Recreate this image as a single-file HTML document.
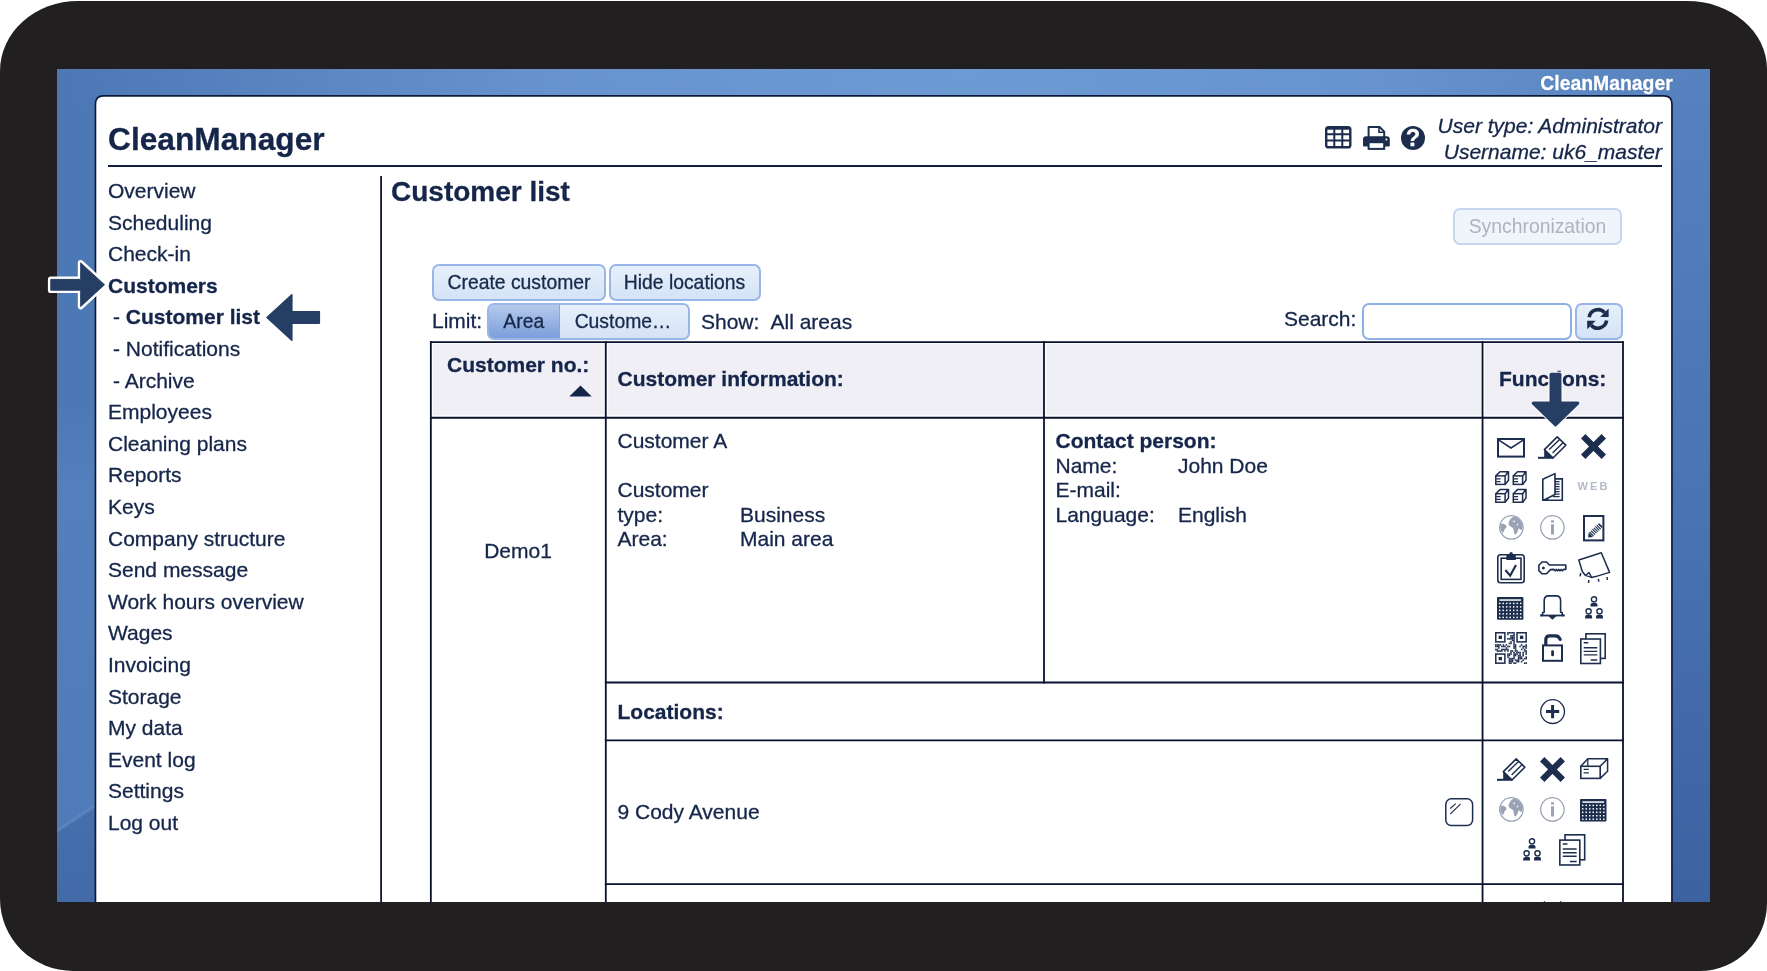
<!DOCTYPE html>
<html lang="en">
<head>
<meta charset="utf-8">
<title>CleanManager - Customer list</title>
<style>
html,body{margin:0;padding:0;background:#fff;}
body{width:1767px;height:971px;overflow:hidden;position:relative;font-family:"Liberation Sans",Arial,sans-serif;color:#15264a;font-size:21px;-webkit-text-stroke-width:0.3px;}
#frame{position:absolute;left:0;top:1px;width:1767px;height:970px;background:#221f20;border-radius:78px 80px 67px 73px / 70px 68px 68px 72px;}
#screen{position:absolute;left:57px;top:69px;width:1653px;height:833px;overflow:hidden;
 background:
  radial-gradient(ellipse 900px 300px at 55% 0%, rgba(114,160,216,0.85) 0%, rgba(114,160,216,0.7) 45%, rgba(114,160,216,0) 100%),
  linear-gradient(180deg,#4d78b6 0%,#4d78b6 100%);}
#lstrip{position:absolute;left:0;top:0;width:40px;height:833px;background:linear-gradient(180deg,rgba(77,120,182,0) 0%,#4d78b6 6%,#4d78b6 40%,#537fbc 50%,#507cb9 88%,#4b75b3 100%);}
#rstrip{position:absolute;left:1610px;top:0;width:43px;height:833px;background:linear-gradient(180deg,rgba(84,129,190,0) 0%,#5481be 5%,#4a74b2 50%,#3c62a0 100%);}
#pg{will-change:transform;position:absolute;left:-57px;top:-69px;width:1767px;height:971px;}
.t{position:absolute;white-space:nowrap;line-height:24px;height:24px;}
.b{font-weight:bold;}
.menu{position:absolute;left:108px;top:175px;font-size:21px;line-height:31.6px;white-space:nowrap;}
.menu div{height:31.6px;}
.menu .sub{padding-left:5px;}
h1{position:absolute;margin:0;left:391px;top:176px;font-size:28px;line-height:32px;font-weight:bold;white-space:nowrap;}
.btn{position:absolute;box-sizing:border-box;border:2px solid #98b6e7;border-radius:7px;background:linear-gradient(#e7f0fb,#d5e3f6);font-size:19.35px;text-align:center;white-space:nowrap;color:#18294b;}
.ic{position:absolute;overflow:visible;}
svg{display:block;}
</style>
</head>
<body>
<div id="frame"></div>
<div id="screen"><div id="lstrip"></div><div id="rstrip"></div><div id="pg">
  <div class="t b" style="left:1400px;top:71px;width:1272.8px;left:400px;text-align:right;color:#fff;font-size:19.4px;text-shadow:0 0 1.5px #3f68a8;">CleanManager</div>
  <svg class="ic" style="left:57px;top:69px;" width="1653" height="833" viewBox="0 0 1653 833"><path d="M0 762 L38 737 L38 833 L0 833 Z" fill="#2f5392" opacity="0.3"/><path d="M0 760 L38 735 L38 739 L0 764 Z" fill="#8db0de" opacity="0.22"/></svg>
  <svg class="ic" style="left:0;top:0;" width="1767" height="971" viewBox="0 0 1767 971">
    <path d="M95.45 930 V104 Q95.45 95.85 103.6 95.85 H1663.8 Q1671.95 95.85 1671.95 104 V930" fill="#fff" stroke="#0c1b3d" stroke-width="1.7"/>
    <path d="M108 166 H1662" stroke="#0f1f3f" stroke-width="2"/>
    <path d="M381.1 176 V930" stroke="#0a1533" stroke-width="1.8"/>
    <g fill="#f0eff6">
      <rect x="433" y="343.6" width="171.9" height="71.6"/>
      <rect x="608.2" y="343.6" width="434.9" height="71.6"/>
      <rect x="1046.4" y="343.6" width="435.2" height="71.6"/>
      <rect x="1484.9" y="343.6" width="137.2" height="71.6"/>
    </g>
    <g stroke="#08122f" stroke-width="1.8" fill="none">
      <path d="M429.95 342.05 H1623.9 M429.95 417.75 H1623.9 M604.9 682.5 H1623.9 M604.9 740.3 H1623.9 M604.9 884.1 H1623.9"/>
      <path d="M430.85 341.15 V930 M605.8 341.15 V930 M1044 341.15 V683.4 M1482.55 341.15 V930 M1623 341.15 V930"/>
    </g>
  </svg>
  <div class="t b" style="left:108px;top:120px;font-size:31.7px;line-height:38px;height:38px;">CleanManager</div>

  <div class="t" style="left:1362px;width:300px;text-align:right;top:113px;font-style:italic;line-height:26.3px;height:auto;">User type: Administrator<br>Username: uk6_master</div>
  <div class="menu">
    <div>Overview</div>
    <div>Scheduling</div>
    <div>Check-in</div>
    <div class="b">Customers</div>
    <div class="sub">- <span class="b">Customer list</span></div>
    <div class="sub">- Notifications</div>
    <div class="sub">- Archive</div>
    <div>Employees</div>
    <div>Cleaning plans</div>
    <div>Reports</div>
    <div>Keys</div>
    <div>Company structure</div>
    <div>Send message</div>
    <div>Work hours overview</div>
    <div>Wages</div>
    <div>Invoicing</div>
    <div>Storage</div>
    <div>My data</div>
    <div>Event log</div>
    <div>Settings</div>
    <div>Log out</div>
  </div>
  <h1>Customer list</h1>

  <div class="btn" style="left:1453px;top:208px;width:169px;height:37px;line-height:32px;-webkit-text-stroke-width:0;color:#adb3c0;background:#f0f4fb;border-color:#c6d6f0;">Synchronization</div>
  <div class="btn" style="left:432px;top:264px;width:174px;height:36.5px;line-height:32.5px;">Create customer</div>
  <div class="btn" style="left:608.5px;top:264px;width:152px;height:36.5px;line-height:32.5px;">Hide locations</div>

  <div class="t" style="left:432px;top:309px;">Limit:</div>
  <div class="btn" style="left:487px;top:303px;width:202.5px;height:36.5px;line-height:32.5px;overflow:hidden;">
    <div style="position:absolute;left:0;top:0;width:69.5px;height:100%;background:linear-gradient(#b5c9ec,#7c9edb);border-right:1px solid #86a6dc;">Area</div>
    <div style="position:absolute;left:70px;top:0;width:128px;height:100%;">Custome…</div>
  </div>
  <div class="t" style="left:701px;top:310px;">Show:</div>
  <div class="t" style="left:770.5px;top:310px;">All areas</div>
  <div class="t" style="left:1284px;top:307px;">Search:</div>
  <div class="btn" style="left:1361.5px;top:303px;width:210px;height:36.5px;background:#fff;border-color:#8fb0e4;"></div>
  <div class="btn" style="left:1575px;top:303px;width:47.5px;height:36.5px;"></div>

  <!-- table -->
  

  <div class="t b" style="left:447px;top:353px;">Customer no.:</div>
  <svg class="ic" style="left:568.7px;top:385.4px;" width="23" height="12" viewBox="0 0 23 12"><path d="M0.3 11.6 L11.5 0.6 L22.7 11.6 Z" fill="#13264a"/></svg>
  <div class="t b" style="left:617.5px;top:367.3px;">Customer information:</div>
  <div class="t b" style="left:1499px;top:367.3px;">Functions:</div>

  <div class="t" style="left:431px;width:174px;text-align:center;top:539px;">Demo1</div>
  <div class="t" style="left:617.5px;top:429px;line-height:24.5px;height:auto;">Customer A<br><br>Customer<br>type:<br>Area:</div>
  <div class="t" style="left:740px;top:429px;line-height:24.5px;height:auto;"><br><br><br>Business<br>Main area</div>
  <div class="t" style="left:1055.5px;top:429px;line-height:24.5px;height:auto;"><span class="b">Contact person:</span><br>Name:<br>E-mail:<br>Language:</div>
  <div class="t" style="left:1178px;top:429px;line-height:24.5px;height:auto;"><br>John Doe<br><br>English</div>
  <div class="t b" style="left:617.5px;top:700px;">Locations:</div>
  <div class="t" style="left:617.5px;top:800px;">9 Cody Avenue</div>

<svg class="ic" style="left:1325px;top:125.5px;" width="26.5" height="22.5" viewBox="0 0 26.5 22.5" ><rect x="1.2" y="1.2" width="24.1" height="20.1" rx="2.4" fill="#fff" stroke="#1c2d4e" stroke-width="2.4"/><path d="M1.2 8.2 H25.3 M1.2 14.6 H25.3 M9.3 3 V21.3 M17.3 3 V21.3" stroke="#1c2d4e" stroke-width="2"/><path d="M1.2 2.7 H25.3" stroke="#1c2d4e" stroke-width="2"/></svg>
<svg class="ic" style="left:1362.8px;top:125.5px;" width="26.8" height="24" viewBox="0 0 26.8 24" ><path d="M5.6 11 V1 H16.6 L21.2 5.6 V11" fill="#fff" stroke="#1c2d4e" stroke-width="2" stroke-linejoin="round"/><path d="M16 1 V6.2 H21.2" fill="none" stroke="#1c2d4e" stroke-width="1.6"/><path d="M0 19.6 V13.2 Q0 10.2 3 10.2 H23.8 Q26.8 10.2 26.8 13.2 V19.6 Q26.8 20.4 26 20.4 H0.8 Q0 20.4 0 19.6 Z" fill="#1c2d4e"/><rect x="5.6" y="16.2" width="15.6" height="6.7" fill="#fff" stroke="#1c2d4e" stroke-width="2"/><circle cx="23.4" cy="13.6" r="1" fill="#fff"/></svg>
<div class="ic" style="left:1401px;top:125.6px;width:24px;height:24px;border-radius:50%;background:#1c2d4e;color:#fff;font-weight:bold;font-size:23.5px;line-height:25.5px;text-align:center;">?</div>
<svg class="ic" style="left:1586.2px;top:307.6px;" width="23.8" height="21.8" viewBox="0 0 23.8 21.8" ><path d="M3.2 9.2 A8.9 8.9 0 0 1 18.6 4.6" fill="none" stroke="#1c2d4e" stroke-width="3.6"/><path d="M22.6 0.6 V9 H14.2 Z" fill="#1c2d4e"/><path d="M20.6 12.6 A8.9 8.9 0 0 1 5.2 17.2" fill="none" stroke="#1c2d4e" stroke-width="3.6"/><path d="M1.2 21.2 V12.8 H9.6 Z" fill="#1c2d4e"/></svg>
<svg class="ic" style="left:1497px;top:437.6px;" width="28" height="19.6" viewBox="0 0 28 19.6" ><rect x="1" y="1" width="26" height="17.6" fill="none" stroke="#1c2d4e" stroke-width="2"/><path d="M1.5 1.8 L14 10 L26.5 1.8" fill="none" stroke="#1c2d4e" stroke-width="1.5"/><path d="M1 1 L4.5 1 L1 3.5 Z M27 1 L23.5 1 L27 3.5 Z" fill="#1c2d4e"/></svg>
<svg class="ic" style="left:1538.3px;top:435.9px;" width="29" height="23" viewBox="0 0 29 23" ><path d="M19.2 0.9 L27.8 9.2 L15 22 L6.4 13.6 Z" fill="#fff" stroke="#1c2d4e" stroke-width="1.6" stroke-linejoin="round"/><path d="M21.6 3.4 L11.2 13.6 M25 6.8 L14.6 17" fill="none" stroke="#1c2d4e" stroke-width="1.4"/><path d="M6.2 13.2 L6.2 22 L15.2 22 Z" fill="#1c2d4e"/><path d="M0 21.8 L15.4 21.8" stroke="#1c2d4e" stroke-width="2"/></svg>
<svg class="ic" style="left:1581px;top:434px;" width="25" height="25" viewBox="0 0 25 25" ><path d="M2.2 2.2 L22.8 22.8 M22.8 2.2 L2.2 22.8" stroke="#1c2d4e" stroke-width="6.2" fill="none"/></svg>
<svg class="ic" style="left:1495.4px;top:471px;" width="32" height="32" viewBox="0 0 32 32" ><g transform="translate(0 0)"><rect x="0.8" y="4.9" width="9.3" height="8.5" fill="none" stroke="#1c2d4e" stroke-width="1.5"/><path d="M0.8 4.9 L5 0.8 L13.5 0.8 L13.5 9.3 L10.1 13.4 M13.5 0.8 L10.1 4.9" fill="none" stroke="#1c2d4e" stroke-width="1.5" stroke-linejoin="round"/><path d="M13.5 0.8 L10.6 0.8 L13.5 3.6 Z" fill="#1c2d4e"/><path d="M1.2 7.9 L5.6 7.9 M1.2 10.6 L5.6 10.6" stroke="#1c2d4e" stroke-width="1.3"/></g><g transform="translate(17.5 0)"><rect x="0.8" y="4.9" width="9.3" height="8.5" fill="none" stroke="#1c2d4e" stroke-width="1.5"/><path d="M0.8 4.9 L5 0.8 L13.5 0.8 L13.5 9.3 L10.1 13.4 M13.5 0.8 L10.1 4.9" fill="none" stroke="#1c2d4e" stroke-width="1.5" stroke-linejoin="round"/><path d="M13.5 0.8 L10.6 0.8 L13.5 3.6 Z" fill="#1c2d4e"/><path d="M1.2 7.9 L5.6 7.9 M1.2 10.6 L5.6 10.6" stroke="#1c2d4e" stroke-width="1.3"/></g><g transform="translate(0 17.8)"><rect x="0.8" y="4.9" width="9.3" height="8.5" fill="none" stroke="#1c2d4e" stroke-width="1.5"/><path d="M0.8 4.9 L5 0.8 L13.5 0.8 L13.5 9.3 L10.1 13.4 M13.5 0.8 L10.1 4.9" fill="none" stroke="#1c2d4e" stroke-width="1.5" stroke-linejoin="round"/><path d="M13.5 0.8 L10.6 0.8 L13.5 3.6 Z" fill="#1c2d4e"/><path d="M1.2 7.9 L5.6 7.9 M1.2 10.6 L5.6 10.6" stroke="#1c2d4e" stroke-width="1.3"/></g><g transform="translate(17.5 17.8)"><rect x="0.8" y="4.9" width="9.3" height="8.5" fill="none" stroke="#1c2d4e" stroke-width="1.5"/><path d="M0.8 4.9 L5 0.8 L13.5 0.8 L13.5 9.3 L10.1 13.4 M13.5 0.8 L10.1 4.9" fill="none" stroke="#1c2d4e" stroke-width="1.5" stroke-linejoin="round"/><path d="M13.5 0.8 L10.6 0.8 L13.5 3.6 Z" fill="#1c2d4e"/><path d="M1.2 7.9 L5.6 7.9 M1.2 10.6 L5.6 10.6" stroke="#1c2d4e" stroke-width="1.3"/></g></svg>
<svg class="ic" style="left:1542px;top:473px;" width="21.2" height="28.2" viewBox="0 0 21.2 28.2" ><path d="M13 5.9 L20.3 5.9 L20.3 27.3 L0.8 27.3" fill="none" stroke="#1c2d4e" stroke-width="1.6"/><path d="M0.8 6.3 L13 0.6 L13 21.5 L3.5 26.3 L0.8 27.3 Z" fill="#fff" stroke="#1c2d4e" stroke-width="1.6" stroke-linejoin="round"/><path d="M13 8.6 H17.6 M13 11.1 H17.6 M13 13.6 H17.6 M13 16.1 H17.6 M13 18.6 H17.6 M13 21.1 H17.6 M11 23.6 H17.6" stroke="#1c2d4e" stroke-width="1.2"/><path d="M2.5 27.3 L5 25.3 L7 27.3 Z" fill="#1c2d4e"/></svg>
<div class="ic b" style="left:1577.5px;top:479.5px;width:31px;height:13px;line-height:13px;font-size:11px;letter-spacing:2.1px;-webkit-text-stroke-width:0;color:#b3bac9;white-space:nowrap;">WEB</div>
<svg class="ic" style="left:1498.8px;top:514.9px;" width="24.8" height="24.8" viewBox="0 0 24.8 24.8" ><circle cx="12.4" cy="12.4" r="11.7" fill="#fff" stroke="#9aa3b6" stroke-width="1.3"/><path d="M1.5 9.5 C3 7.5 5 8.5 6.5 10 C8.5 11.5 7 13.5 5.5 14.5 C5 16.5 4.5 18 3.2 17.6 C1.5 15.5 0.9 12.5 1.5 9.5 Z" fill="#9aa3b6"/><path d="M10 7 C11 4 13 2 15.5 1.6 C19 2.6 22 5.5 23.3 9 C23.8 12 23.5 14 22.5 15 C21 14.5 20.5 13 19.5 13.5 C19 15.5 18 19 16.2 19.5 C14.5 18 15 15 14 13 C12.5 12 10.5 11.5 9.8 9.8 C9.5 8.5 9.6 7.8 10 7 Z" fill="#9aa3b6"/><path d="M13.5 6.5 L15.5 5 L16 7.5 Z M17.5 9 L19.5 8.5 L18.5 11 Z" fill="#fff" opacity="0.8"/></svg>
<svg class="ic" style="left:1540.1px;top:514.9px;" width="24.8" height="24.8" viewBox="0 0 24.8 24.8" ><circle cx="12.4" cy="12.4" r="11.7" fill="#fff" stroke="#9aa3b6" stroke-width="1.3"/><rect x="11" y="9.3" width="3" height="10.2" fill="#9aa3b6"/><rect x="11" y="5.3" width="3" height="2.3" fill="#9aa3b6"/></svg>
<svg class="ic" style="left:1583px;top:515px;" width="21.4" height="26.4" viewBox="0 0 21.4 26.4" ><rect x="1" y="1" width="19.4" height="24.4" fill="#fff" stroke="#1c2d4e" stroke-width="2"/><path d="M8.2 19.4 L17.2 10.6" stroke="#1c2d4e" stroke-width="5.6" stroke-dasharray="1.1 0.9" fill="none"/><path d="M5.2 22.6 L5.6 17.6 L10 22 Z" fill="#1c2d4e"/><path d="M16.2 8.2 L19.6 11.6 L18.6 12.6 L15.2 9.2 Z" fill="#1c2d4e"/></svg>
<svg class="ic" style="left:1497px;top:551.7px;" width="28" height="31.7" viewBox="0 0 28 31.7" ><rect x="0.8" y="2.8" width="26.4" height="28" rx="2.8" fill="#fff" stroke="#1c2d4e" stroke-width="1.6"/><rect x="4.2" y="6.2" width="19.8" height="21.2" fill="none" stroke="#1c2d4e" stroke-width="1.6"/><path d="M9.4 2.2 H12.2 L13 0.2 H15.2 L16 2.2 H18.8 V8 H9.4 Z" fill="#1c2d4e"/><path d="M8.4 18 L13.2 23.6 L19 13" fill="none" stroke="#1c2d4e" stroke-width="2.1"/></svg>
<svg class="ic" style="left:1538px;top:560.7px;" width="28.8" height="13.8" viewBox="0 0 28.8 13.8" ><path d="M4 1 L8.5 1 L11.5 4 L27.8 4 L27.8 8.4 L25.6 8.4 L24.4 9.8 L23.2 8.4 L22 9.8 L20.8 8.4 L19.6 9.8 L18.4 8.4 L17.2 9.8 L16 8.4 L12.5 8.6 L8.5 12.8 L4 12.8 L0.9 9.6 L0.9 4.2 Z" fill="#fff" stroke="#1c2d4e" stroke-width="1.6" stroke-linejoin="round"/><circle cx="5.4" cy="6.9" r="1.5" fill="#1c2d4e"/></svg>
<svg class="ic" style="left:1577.8px;top:551.7px;" width="32.5" height="31.3" viewBox="0 0 32.5 31.3" ><path d="M0.8 8 L23.3 0.8 L31.6 20.4 L17.5 24.6 L13.5 25.4 L11 20.5 L7.5 23.5 L4.3 19.5 Z" fill="#fff" stroke="#1c2d4e" stroke-width="1.5" stroke-linejoin="round"/><path d="M7.5 23.5 L13.5 25.4" stroke="#1c2d4e" stroke-width="1.2"/><path d="M2.6 21 L2.2 24.4 M10.8 28 L10.6 31 M20.2 27 L21 29.6 M29 25 L29.4 28" stroke="#1c2d4e" stroke-width="1.5"/></svg>
<svg class="ic" style="left:1497.2px;top:597.2px;" width="26.4" height="22.8" viewBox="0 0 26.4 22.8" ><rect x="0" y="0" width="26.4" height="22.8" rx="0.8" fill="#1c2d4e"/><rect x="2.4" y="2.3" width="21.599999999999998" height="1.5" fill="#fff"/><rect x="1.95" y="5.65" width="1.5" height="1.5" fill="#fff"/><rect x="1.95" y="9.15" width="1.5" height="1.5" fill="#fff"/><rect x="1.95" y="12.65" width="1.5" height="1.5" fill="#fff"/><rect x="1.95" y="16.15" width="1.5" height="1.5" fill="#fff"/><rect x="1.95" y="19.65" width="1.5" height="1.5" fill="#fff"/><rect x="5.45" y="5.65" width="1.5" height="1.5" fill="#fff"/><rect x="5.45" y="9.15" width="1.5" height="1.5" fill="#fff"/><rect x="5.45" y="12.65" width="1.5" height="1.5" fill="#fff"/><rect x="5.45" y="16.15" width="1.5" height="1.5" fill="#fff"/><rect x="5.45" y="19.65" width="1.5" height="1.5" fill="#fff"/><rect x="8.95" y="5.65" width="1.5" height="1.5" fill="#fff"/><rect x="8.95" y="9.15" width="1.5" height="1.5" fill="#fff"/><rect x="8.95" y="12.65" width="1.5" height="1.5" fill="#fff"/><rect x="8.95" y="16.15" width="1.5" height="1.5" fill="#fff"/><rect x="8.95" y="19.65" width="1.5" height="1.5" fill="#fff"/><rect x="12.45" y="5.65" width="1.5" height="1.5" fill="#fff"/><rect x="12.45" y="9.15" width="1.5" height="1.5" fill="#fff"/><rect x="12.45" y="12.65" width="1.5" height="1.5" fill="#fff"/><rect x="12.45" y="16.15" width="1.5" height="1.5" fill="#fff"/><rect x="12.45" y="19.65" width="1.5" height="1.5" fill="#fff"/><rect x="15.95" y="5.65" width="1.5" height="1.5" fill="#fff"/><rect x="15.95" y="9.15" width="1.5" height="1.5" fill="#fff"/><rect x="15.95" y="12.65" width="1.5" height="1.5" fill="#fff"/><rect x="15.95" y="16.15" width="1.5" height="1.5" fill="#fff"/><rect x="15.95" y="19.65" width="1.5" height="1.5" fill="#fff"/><rect x="19.45" y="5.65" width="1.5" height="1.5" fill="#fff"/><rect x="19.45" y="9.15" width="1.5" height="1.5" fill="#fff"/><rect x="19.45" y="12.65" width="1.5" height="1.5" fill="#fff"/><rect x="19.45" y="16.15" width="1.5" height="1.5" fill="#fff"/><rect x="19.45" y="19.65" width="1.5" height="1.5" fill="#fff"/><rect x="22.95" y="5.65" width="1.5" height="1.5" fill="#fff"/><rect x="22.95" y="9.15" width="1.5" height="1.5" fill="#fff"/><rect x="22.95" y="12.65" width="1.5" height="1.5" fill="#fff"/><rect x="22.95" y="16.15" width="1.5" height="1.5" fill="#fff"/><rect x="22.95" y="19.65" width="1.5" height="1.5" fill="#fff"/></svg>
<svg class="ic" style="left:1540px;top:595.3px;" width="24.8" height="24.8" viewBox="0 0 24.8 24.8" ><path d="M0.3 20.4 L2.6 20.4 L2.6 17.6 L4.2 17.2 L4.2 5.6 Q4.2 0.9 8.6 0.9 L16.2 0.9 Q20.6 0.9 20.6 5.6 L20.6 17.2 L22.2 17.6 L22.2 20.4 L24.5 20.4" fill="#fff" stroke="#1c2d4e" stroke-width="1.6" stroke-linejoin="round"/><path d="M0.3 20.5 H24.5" stroke="#1c2d4e" stroke-width="1.8"/><path d="M8.3 21 L16.5 21 L12.4 24.7 Z" fill="#1c2d4e"/></svg>
<svg class="ic" style="left:1584.8px;top:595.6px;" width="18.2" height="23" viewBox="0 0 18.2 23" ><circle cx="9" cy="3.3" r="2.6" fill="#fff" stroke="#1c2d4e" stroke-width="1.4"/><path d="M5.5 10.6 L5.5 8.899999999999999 Q5.7 6.699999999999999 9 6.6 Q12.3 6.699999999999999 12.5 8.899999999999999 L12.5 10.6 Z" fill="#1c2d4e"/><circle cx="3.6" cy="15.3" r="2.6" fill="#fff" stroke="#1c2d4e" stroke-width="1.4"/><path d="M0.10000000000000009 22.6 L0.10000000000000009 20.9 Q0.30000000000000027 18.7 3.6 18.6 Q6.9 18.7 7.1 20.9 L7.1 22.6 Z" fill="#1c2d4e"/><circle cx="14.5" cy="15.3" r="2.6" fill="#fff" stroke="#1c2d4e" stroke-width="1.4"/><path d="M11.0 22.6 L11.0 20.9 Q11.2 18.7 14.5 18.6 Q17.8 18.7 18.0 20.9 L18.0 22.6 Z" fill="#1c2d4e"/></svg>
<svg class="ic" style="left:1495.4px;top:632.3px;" width="32" height="32" viewBox="0 0 32 32" ><rect x="0.00" y="12.16" width="1.57" height="1.57" fill="#1c2d4e"/><rect x="0.00" y="13.68" width="1.57" height="1.57" fill="#1c2d4e"/><rect x="0.00" y="16.72" width="1.57" height="1.57" fill="#1c2d4e"/><rect x="1.52" y="12.16" width="1.57" height="1.57" fill="#1c2d4e"/><rect x="1.52" y="13.68" width="1.57" height="1.57" fill="#1c2d4e"/><rect x="1.52" y="16.72" width="1.57" height="1.57" fill="#1c2d4e"/><rect x="1.52" y="18.24" width="1.57" height="1.57" fill="#1c2d4e"/><rect x="3.04" y="12.16" width="1.57" height="1.57" fill="#1c2d4e"/><rect x="3.04" y="13.68" width="1.57" height="1.57" fill="#1c2d4e"/><rect x="3.04" y="15.20" width="1.57" height="1.57" fill="#1c2d4e"/><rect x="3.04" y="18.24" width="1.57" height="1.57" fill="#1c2d4e"/><rect x="4.56" y="12.16" width="1.57" height="1.57" fill="#1c2d4e"/><rect x="4.56" y="18.24" width="1.57" height="1.57" fill="#1c2d4e"/><rect x="6.08" y="13.68" width="1.57" height="1.57" fill="#1c2d4e"/><rect x="6.08" y="16.72" width="1.57" height="1.57" fill="#1c2d4e"/><rect x="6.08" y="18.24" width="1.57" height="1.57" fill="#1c2d4e"/><rect x="7.60" y="12.16" width="1.57" height="1.57" fill="#1c2d4e"/><rect x="7.60" y="13.68" width="1.57" height="1.57" fill="#1c2d4e"/><rect x="7.60" y="16.72" width="1.57" height="1.57" fill="#1c2d4e"/><rect x="9.12" y="13.68" width="1.57" height="1.57" fill="#1c2d4e"/><rect x="9.12" y="16.72" width="1.57" height="1.57" fill="#1c2d4e"/><rect x="9.12" y="18.24" width="1.57" height="1.57" fill="#1c2d4e"/><rect x="10.64" y="12.16" width="1.57" height="1.57" fill="#1c2d4e"/><rect x="10.64" y="15.20" width="1.57" height="1.57" fill="#1c2d4e"/><rect x="10.64" y="16.72" width="1.57" height="1.57" fill="#1c2d4e"/><rect x="12.16" y="0.00" width="1.57" height="1.57" fill="#1c2d4e"/><rect x="12.16" y="1.52" width="1.57" height="1.57" fill="#1c2d4e"/><rect x="12.16" y="6.08" width="1.57" height="1.57" fill="#1c2d4e"/><rect x="12.16" y="13.68" width="1.57" height="1.57" fill="#1c2d4e"/><rect x="12.16" y="16.72" width="1.57" height="1.57" fill="#1c2d4e"/><rect x="12.16" y="18.24" width="1.57" height="1.57" fill="#1c2d4e"/><rect x="12.16" y="21.28" width="1.57" height="1.57" fill="#1c2d4e"/><rect x="12.16" y="22.80" width="1.57" height="1.57" fill="#1c2d4e"/><rect x="12.16" y="24.32" width="1.57" height="1.57" fill="#1c2d4e"/><rect x="13.68" y="0.00" width="1.57" height="1.57" fill="#1c2d4e"/><rect x="13.68" y="6.08" width="1.57" height="1.57" fill="#1c2d4e"/><rect x="13.68" y="10.64" width="1.57" height="1.57" fill="#1c2d4e"/><rect x="13.68" y="13.68" width="1.57" height="1.57" fill="#1c2d4e"/><rect x="13.68" y="21.28" width="1.57" height="1.57" fill="#1c2d4e"/><rect x="13.68" y="22.80" width="1.57" height="1.57" fill="#1c2d4e"/><rect x="13.68" y="25.84" width="1.57" height="1.57" fill="#1c2d4e"/><rect x="13.68" y="27.36" width="1.57" height="1.57" fill="#1c2d4e"/><rect x="13.68" y="28.88" width="1.57" height="1.57" fill="#1c2d4e"/><rect x="13.68" y="30.40" width="1.57" height="1.57" fill="#1c2d4e"/><rect x="15.20" y="0.00" width="1.57" height="1.57" fill="#1c2d4e"/><rect x="15.20" y="3.04" width="1.57" height="1.57" fill="#1c2d4e"/><rect x="15.20" y="4.56" width="1.57" height="1.57" fill="#1c2d4e"/><rect x="15.20" y="6.08" width="1.57" height="1.57" fill="#1c2d4e"/><rect x="15.20" y="9.12" width="1.57" height="1.57" fill="#1c2d4e"/><rect x="15.20" y="10.64" width="1.57" height="1.57" fill="#1c2d4e"/><rect x="15.20" y="18.24" width="1.57" height="1.57" fill="#1c2d4e"/><rect x="15.20" y="19.76" width="1.57" height="1.57" fill="#1c2d4e"/><rect x="15.20" y="21.28" width="1.57" height="1.57" fill="#1c2d4e"/><rect x="15.20" y="25.84" width="1.57" height="1.57" fill="#1c2d4e"/><rect x="15.20" y="27.36" width="1.57" height="1.57" fill="#1c2d4e"/><rect x="15.20" y="28.88" width="1.57" height="1.57" fill="#1c2d4e"/><rect x="15.20" y="30.40" width="1.57" height="1.57" fill="#1c2d4e"/><rect x="16.72" y="0.00" width="1.57" height="1.57" fill="#1c2d4e"/><rect x="16.72" y="3.04" width="1.57" height="1.57" fill="#1c2d4e"/><rect x="16.72" y="4.56" width="1.57" height="1.57" fill="#1c2d4e"/><rect x="16.72" y="6.08" width="1.57" height="1.57" fill="#1c2d4e"/><rect x="16.72" y="7.60" width="1.57" height="1.57" fill="#1c2d4e"/><rect x="16.72" y="18.24" width="1.57" height="1.57" fill="#1c2d4e"/><rect x="16.72" y="25.84" width="1.57" height="1.57" fill="#1c2d4e"/><rect x="16.72" y="27.36" width="1.57" height="1.57" fill="#1c2d4e"/><rect x="16.72" y="28.88" width="1.57" height="1.57" fill="#1c2d4e"/><rect x="18.24" y="0.00" width="1.57" height="1.57" fill="#1c2d4e"/><rect x="18.24" y="1.52" width="1.57" height="1.57" fill="#1c2d4e"/><rect x="18.24" y="3.04" width="1.57" height="1.57" fill="#1c2d4e"/><rect x="18.24" y="4.56" width="1.57" height="1.57" fill="#1c2d4e"/><rect x="18.24" y="6.08" width="1.57" height="1.57" fill="#1c2d4e"/><rect x="18.24" y="7.60" width="1.57" height="1.57" fill="#1c2d4e"/><rect x="18.24" y="9.12" width="1.57" height="1.57" fill="#1c2d4e"/><rect x="18.24" y="10.64" width="1.57" height="1.57" fill="#1c2d4e"/><rect x="18.24" y="12.16" width="1.57" height="1.57" fill="#1c2d4e"/><rect x="18.24" y="13.68" width="1.57" height="1.57" fill="#1c2d4e"/><rect x="18.24" y="15.20" width="1.57" height="1.57" fill="#1c2d4e"/><rect x="18.24" y="19.76" width="1.57" height="1.57" fill="#1c2d4e"/><rect x="18.24" y="21.28" width="1.57" height="1.57" fill="#1c2d4e"/><rect x="18.24" y="22.80" width="1.57" height="1.57" fill="#1c2d4e"/><rect x="18.24" y="24.32" width="1.57" height="1.57" fill="#1c2d4e"/><rect x="18.24" y="25.84" width="1.57" height="1.57" fill="#1c2d4e"/><rect x="18.24" y="30.40" width="1.57" height="1.57" fill="#1c2d4e"/><rect x="19.76" y="12.16" width="1.57" height="1.57" fill="#1c2d4e"/><rect x="19.76" y="13.68" width="1.57" height="1.57" fill="#1c2d4e"/><rect x="19.76" y="15.20" width="1.57" height="1.57" fill="#1c2d4e"/><rect x="19.76" y="16.72" width="1.57" height="1.57" fill="#1c2d4e"/><rect x="19.76" y="18.24" width="1.57" height="1.57" fill="#1c2d4e"/><rect x="19.76" y="21.28" width="1.57" height="1.57" fill="#1c2d4e"/><rect x="19.76" y="22.80" width="1.57" height="1.57" fill="#1c2d4e"/><rect x="19.76" y="27.36" width="1.57" height="1.57" fill="#1c2d4e"/><rect x="19.76" y="30.40" width="1.57" height="1.57" fill="#1c2d4e"/><rect x="21.28" y="18.24" width="1.57" height="1.57" fill="#1c2d4e"/><rect x="21.28" y="19.76" width="1.57" height="1.57" fill="#1c2d4e"/><rect x="21.28" y="21.28" width="1.57" height="1.57" fill="#1c2d4e"/><rect x="21.28" y="27.36" width="1.57" height="1.57" fill="#1c2d4e"/><rect x="21.28" y="28.88" width="1.57" height="1.57" fill="#1c2d4e"/><rect x="22.80" y="19.76" width="1.57" height="1.57" fill="#1c2d4e"/><rect x="22.80" y="22.80" width="1.57" height="1.57" fill="#1c2d4e"/><rect x="22.80" y="24.32" width="1.57" height="1.57" fill="#1c2d4e"/><rect x="22.80" y="25.84" width="1.57" height="1.57" fill="#1c2d4e"/><rect x="22.80" y="27.36" width="1.57" height="1.57" fill="#1c2d4e"/><rect x="22.80" y="28.88" width="1.57" height="1.57" fill="#1c2d4e"/><rect x="24.32" y="13.68" width="1.57" height="1.57" fill="#1c2d4e"/><rect x="24.32" y="19.76" width="1.57" height="1.57" fill="#1c2d4e"/><rect x="24.32" y="21.28" width="1.57" height="1.57" fill="#1c2d4e"/><rect x="24.32" y="22.80" width="1.57" height="1.57" fill="#1c2d4e"/><rect x="24.32" y="24.32" width="1.57" height="1.57" fill="#1c2d4e"/><rect x="24.32" y="25.84" width="1.57" height="1.57" fill="#1c2d4e"/><rect x="25.84" y="12.16" width="1.57" height="1.57" fill="#1c2d4e"/><rect x="25.84" y="16.72" width="1.57" height="1.57" fill="#1c2d4e"/><rect x="25.84" y="24.32" width="1.57" height="1.57" fill="#1c2d4e"/><rect x="25.84" y="25.84" width="1.57" height="1.57" fill="#1c2d4e"/><rect x="25.84" y="28.88" width="1.57" height="1.57" fill="#1c2d4e"/><rect x="27.36" y="13.68" width="1.57" height="1.57" fill="#1c2d4e"/><rect x="27.36" y="15.20" width="1.57" height="1.57" fill="#1c2d4e"/><rect x="27.36" y="19.76" width="1.57" height="1.57" fill="#1c2d4e"/><rect x="27.36" y="21.28" width="1.57" height="1.57" fill="#1c2d4e"/><rect x="27.36" y="22.80" width="1.57" height="1.57" fill="#1c2d4e"/><rect x="27.36" y="27.36" width="1.57" height="1.57" fill="#1c2d4e"/><rect x="28.88" y="13.68" width="1.57" height="1.57" fill="#1c2d4e"/><rect x="28.88" y="16.72" width="1.57" height="1.57" fill="#1c2d4e"/><rect x="28.88" y="18.24" width="1.57" height="1.57" fill="#1c2d4e"/><rect x="28.88" y="25.84" width="1.57" height="1.57" fill="#1c2d4e"/><rect x="28.88" y="30.40" width="1.57" height="1.57" fill="#1c2d4e"/><rect x="30.40" y="12.16" width="1.57" height="1.57" fill="#1c2d4e"/><rect x="30.40" y="13.68" width="1.57" height="1.57" fill="#1c2d4e"/><rect x="30.40" y="15.20" width="1.57" height="1.57" fill="#1c2d4e"/><rect x="30.40" y="18.24" width="1.57" height="1.57" fill="#1c2d4e"/><rect x="30.40" y="19.76" width="1.57" height="1.57" fill="#1c2d4e"/><rect x="30.40" y="21.28" width="1.57" height="1.57" fill="#1c2d4e"/><rect x="30.40" y="24.32" width="1.57" height="1.57" fill="#1c2d4e"/><rect x="30.40" y="25.84" width="1.57" height="1.57" fill="#1c2d4e"/><rect x="30.40" y="30.40" width="1.57" height="1.57" fill="#1c2d4e"/><rect x="0.76" y="0.76" width="9.12" height="9.12" fill="#fff" stroke="#1c2d4e" stroke-width="1.52"/><rect x="3.65" y="3.65" width="3.34" height="3.34" fill="#1c2d4e"/><rect x="22.04" y="0.76" width="9.12" height="9.12" fill="#fff" stroke="#1c2d4e" stroke-width="1.52"/><rect x="24.93" y="3.65" width="3.34" height="3.34" fill="#1c2d4e"/><rect x="0.76" y="22.04" width="9.12" height="9.12" fill="#fff" stroke="#1c2d4e" stroke-width="1.52"/><rect x="3.65" y="24.93" width="3.34" height="3.34" fill="#1c2d4e"/></svg>
<svg class="ic" style="left:1542px;top:634.3px;" width="21" height="27.8" viewBox="0 0 21 27.8" ><path d="M3.8 11.5 L3.8 5.8 Q3.8 1.8 7.6 1.8 L13.8 1.8 Q16.4 1.8 18.2 5.4" fill="none" stroke="#1c2d4e" stroke-width="3.2" stroke-linecap="round"/><rect x="1" y="11.4" width="19" height="15.4" fill="#fff" stroke="#1c2d4e" stroke-width="2"/><rect x="9.2" y="16.2" width="2.8" height="6" rx="1.2" fill="#1c2d4e"/></svg>
<svg class="ic" style="left:1579.8px;top:632.5px;" width="26" height="31.3" viewBox="0 0 26 31.3" ><rect x="5.90" y="0.80" width="19.30" height="24.60" fill="#fff" stroke="#1c2d4e" stroke-width="1.6"/><rect x="0.80" y="6.00" width="19.60" height="24.50" fill="#fff" stroke="#1c2d4e" stroke-width="1.6"/><path d="M3.70 9.80 H8.30 M3.70 14.80 H17.30 M3.70 18.40 H17.30 M3.70 21.90 H17.30 M10.70 27.00 H17.30" stroke="#1c2d4e" stroke-width="1.4"/></svg>
<svg class="ic" style="left:1539.8px;top:698.8px;" width="25.2" height="25.2" viewBox="0 0 25.2 25.2" ><circle cx="12.6" cy="12.6" r="11.9" fill="#fff" stroke="#1c2d4e" stroke-width="1.3"/><path d="M6 12.6 H19.2 M12.6 6 V19.2" stroke="#1c2d4e" stroke-width="3"/></svg>
<svg class="ic" style="left:1444.6px;top:798px;" width="28.4" height="28.4" viewBox="0 0 28.4 28.4" ><rect x="0.8" y="0.8" width="26.8" height="26.8" rx="5.5" fill="#fff" stroke="#1c2d4e" stroke-width="1.5"/><path d="M5.2 10.5 L10.8 5.6 M5.2 16.1 L15.7 5.8" stroke="#1c2d4e" stroke-width="1.1"/></svg>
<svg class="ic" style="left:1497px;top:758.3px;" width="29" height="23" viewBox="0 0 29 23" ><path d="M19.2 0.9 L27.8 9.2 L15 22 L6.4 13.6 Z" fill="#fff" stroke="#1c2d4e" stroke-width="1.6" stroke-linejoin="round"/><path d="M21.6 3.4 L11.2 13.6 M25 6.8 L14.6 17" fill="none" stroke="#1c2d4e" stroke-width="1.4"/><path d="M6.2 13.2 L6.2 22 L15.2 22 Z" fill="#1c2d4e"/><path d="M0 21.8 L15.4 21.8" stroke="#1c2d4e" stroke-width="2"/></svg>
<svg class="ic" style="left:1540px;top:756.8px;" width="25" height="25" viewBox="0 0 25 25" ><path d="M2.2 2.2 L22.8 22.8 M22.8 2.2 L2.2 22.8" stroke="#1c2d4e" stroke-width="6.2" fill="none"/></svg>
<svg class="ic" style="left:1579.7px;top:758.4px;" width="28.4" height="21.2" viewBox="0 0 28.4 21.2" ><path d="M0.8 8.3 L7.8 0.8 L27.6 0.8 L27.6 13.2 L20.2 20.4" fill="#fff" stroke="#1c2d4e" stroke-width="1.5" stroke-linejoin="round"/><path d="M7.8 0.8 V8.3" stroke="#1c2d4e" stroke-width="1.3"/><rect x="0.8" y="8.3" width="19.4" height="12.1" fill="#fff" stroke="#1c2d4e" stroke-width="1.6"/><path d="M20.2 8.3 L27.6 0.8" stroke="#1c2d4e" stroke-width="1.5"/><path d="M27.6 0.8 L24.5 0.8 L27.6 3.8 Z" fill="#1c2d4e"/><path d="M3.6 11.4 H8.8 M3.6 14.9 H8.8" stroke="#1c2d4e" stroke-width="1.4"/></svg>
<svg class="ic" style="left:1499px;top:797.3px;" width="24.8" height="24.8" viewBox="0 0 24.8 24.8" ><circle cx="12.4" cy="12.4" r="11.7" fill="#fff" stroke="#9aa3b6" stroke-width="1.3"/><path d="M1.5 9.5 C3 7.5 5 8.5 6.5 10 C8.5 11.5 7 13.5 5.5 14.5 C5 16.5 4.5 18 3.2 17.6 C1.5 15.5 0.9 12.5 1.5 9.5 Z" fill="#9aa3b6"/><path d="M10 7 C11 4 13 2 15.5 1.6 C19 2.6 22 5.5 23.3 9 C23.8 12 23.5 14 22.5 15 C21 14.5 20.5 13 19.5 13.5 C19 15.5 18 19 16.2 19.5 C14.5 18 15 15 14 13 C12.5 12 10.5 11.5 9.8 9.8 C9.5 8.5 9.6 7.8 10 7 Z" fill="#9aa3b6"/><path d="M13.5 6.5 L15.5 5 L16 7.5 Z M17.5 9 L19.5 8.5 L18.5 11 Z" fill="#fff" opacity="0.8"/></svg>
<svg class="ic" style="left:1540.2px;top:797.3px;" width="24.8" height="24.8" viewBox="0 0 24.8 24.8" ><circle cx="12.4" cy="12.4" r="11.7" fill="#fff" stroke="#9aa3b6" stroke-width="1.3"/><rect x="11" y="9.3" width="3" height="10.2" fill="#9aa3b6"/><rect x="11" y="5.3" width="3" height="2.3" fill="#9aa3b6"/></svg>
<svg class="ic" style="left:1579.6px;top:799.2px;" width="26.5" height="22.6" viewBox="0 0 26.5 22.6" ><rect x="0" y="0" width="26.5" height="22.6" rx="0.8" fill="#1c2d4e"/><rect x="2.4" y="2.3" width="21.7" height="1.5" fill="#fff"/><rect x="1.95" y="5.65" width="1.5" height="1.5" fill="#fff"/><rect x="1.95" y="9.10" width="1.5" height="1.5" fill="#fff"/><rect x="1.95" y="12.55" width="1.5" height="1.5" fill="#fff"/><rect x="1.95" y="16.00" width="1.5" height="1.5" fill="#fff"/><rect x="1.95" y="19.45" width="1.5" height="1.5" fill="#fff"/><rect x="5.47" y="5.65" width="1.5" height="1.5" fill="#fff"/><rect x="5.47" y="9.10" width="1.5" height="1.5" fill="#fff"/><rect x="5.47" y="12.55" width="1.5" height="1.5" fill="#fff"/><rect x="5.47" y="16.00" width="1.5" height="1.5" fill="#fff"/><rect x="5.47" y="19.45" width="1.5" height="1.5" fill="#fff"/><rect x="8.98" y="5.65" width="1.5" height="1.5" fill="#fff"/><rect x="8.98" y="9.10" width="1.5" height="1.5" fill="#fff"/><rect x="8.98" y="12.55" width="1.5" height="1.5" fill="#fff"/><rect x="8.98" y="16.00" width="1.5" height="1.5" fill="#fff"/><rect x="8.98" y="19.45" width="1.5" height="1.5" fill="#fff"/><rect x="12.50" y="5.65" width="1.5" height="1.5" fill="#fff"/><rect x="12.50" y="9.10" width="1.5" height="1.5" fill="#fff"/><rect x="12.50" y="12.55" width="1.5" height="1.5" fill="#fff"/><rect x="12.50" y="16.00" width="1.5" height="1.5" fill="#fff"/><rect x="12.50" y="19.45" width="1.5" height="1.5" fill="#fff"/><rect x="16.02" y="5.65" width="1.5" height="1.5" fill="#fff"/><rect x="16.02" y="9.10" width="1.5" height="1.5" fill="#fff"/><rect x="16.02" y="12.55" width="1.5" height="1.5" fill="#fff"/><rect x="16.02" y="16.00" width="1.5" height="1.5" fill="#fff"/><rect x="16.02" y="19.45" width="1.5" height="1.5" fill="#fff"/><rect x="19.53" y="5.65" width="1.5" height="1.5" fill="#fff"/><rect x="19.53" y="9.10" width="1.5" height="1.5" fill="#fff"/><rect x="19.53" y="12.55" width="1.5" height="1.5" fill="#fff"/><rect x="19.53" y="16.00" width="1.5" height="1.5" fill="#fff"/><rect x="19.53" y="19.45" width="1.5" height="1.5" fill="#fff"/><rect x="23.05" y="5.65" width="1.5" height="1.5" fill="#fff"/><rect x="23.05" y="9.10" width="1.5" height="1.5" fill="#fff"/><rect x="23.05" y="12.55" width="1.5" height="1.5" fill="#fff"/><rect x="23.05" y="16.00" width="1.5" height="1.5" fill="#fff"/><rect x="23.05" y="19.45" width="1.5" height="1.5" fill="#fff"/></svg>
<svg class="ic" style="left:1523.3px;top:837.5px;" width="18.2" height="23" viewBox="0 0 18.2 23" ><circle cx="9" cy="3.3" r="2.6" fill="#fff" stroke="#1c2d4e" stroke-width="1.4"/><path d="M5.5 10.6 L5.5 8.899999999999999 Q5.7 6.699999999999999 9 6.6 Q12.3 6.699999999999999 12.5 8.899999999999999 L12.5 10.6 Z" fill="#1c2d4e"/><circle cx="3.6" cy="15.3" r="2.6" fill="#fff" stroke="#1c2d4e" stroke-width="1.4"/><path d="M0.10000000000000009 22.6 L0.10000000000000009 20.9 Q0.30000000000000027 18.7 3.6 18.6 Q6.9 18.7 7.1 20.9 L7.1 22.6 Z" fill="#1c2d4e"/><circle cx="14.5" cy="15.3" r="2.6" fill="#fff" stroke="#1c2d4e" stroke-width="1.4"/><path d="M11.0 22.6 L11.0 20.9 Q11.2 18.7 14.5 18.6 Q17.8 18.7 18.0 20.9 L18.0 22.6 Z" fill="#1c2d4e"/></svg>
<svg class="ic" style="left:1558.6px;top:834.2px;" width="26.5" height="31.8" viewBox="0 0 26.5 31.8" ><rect x="6.01" y="0.81" width="19.67" height="24.99" fill="#fff" stroke="#1c2d4e" stroke-width="1.6"/><rect x="0.82" y="6.10" width="19.98" height="24.89" fill="#fff" stroke="#1c2d4e" stroke-width="1.6"/><path d="M3.77 9.96 H8.46 M3.77 15.04 H17.63 M3.77 18.69 H17.63 M3.77 22.25 H17.63 M10.91 27.43 H17.63" stroke="#1c2d4e" stroke-width="1.4"/></svg>
<svg class="ic" style="left:1444.6px;top:942px;" width="28.4" height="28.4" viewBox="0 0 28.4 28.4" ><rect x="0.8" y="0.8" width="26.8" height="26.8" rx="5.5" fill="#fff" stroke="#1c2d4e" stroke-width="1.5"/><path d="M5.2 10.5 L10.8 5.6 M5.2 16.1 L15.7 5.8" stroke="#1c2d4e" stroke-width="1.1"/></svg>
<svg class="ic" style="left:1497px;top:902.3px;" width="29" height="23" viewBox="0 0 29 23" ><path d="M19.2 0.9 L27.8 9.2 L15 22 L6.4 13.6 Z" fill="#fff" stroke="#1c2d4e" stroke-width="1.6" stroke-linejoin="round"/><path d="M21.6 3.4 L11.2 13.6 M25 6.8 L14.6 17" fill="none" stroke="#1c2d4e" stroke-width="1.4"/><path d="M6.2 13.2 L6.2 22 L15.2 22 Z" fill="#1c2d4e"/><path d="M0 21.8 L15.4 21.8" stroke="#1c2d4e" stroke-width="2"/></svg>
<svg class="ic" style="left:1540px;top:900.8px;" width="25" height="25" viewBox="0 0 25 25" ><path d="M2.2 2.2 L22.8 22.8 M22.8 2.2 L2.2 22.8" stroke="#1c2d4e" stroke-width="6.2" fill="none"/></svg>
<svg class="ic" style="left:1579.7px;top:902.4px;" width="28.4" height="21.2" viewBox="0 0 28.4 21.2" ><path d="M0.8 8.3 L7.8 0.8 L27.6 0.8 L27.6 13.2 L20.2 20.4" fill="#fff" stroke="#1c2d4e" stroke-width="1.5" stroke-linejoin="round"/><path d="M7.8 0.8 V8.3" stroke="#1c2d4e" stroke-width="1.3"/><rect x="0.8" y="8.3" width="19.4" height="12.1" fill="#fff" stroke="#1c2d4e" stroke-width="1.6"/><path d="M20.2 8.3 L27.6 0.8" stroke="#1c2d4e" stroke-width="1.5"/><path d="M27.6 0.8 L24.5 0.8 L27.6 3.8 Z" fill="#1c2d4e"/><path d="M3.6 11.4 H8.8 M3.6 14.9 H8.8" stroke="#1c2d4e" stroke-width="1.4"/></svg>
<svg class="ic" style="left:1499px;top:941.3px;" width="24.8" height="24.8" viewBox="0 0 24.8 24.8" ><circle cx="12.4" cy="12.4" r="11.7" fill="#fff" stroke="#9aa3b6" stroke-width="1.3"/><path d="M1.5 9.5 C3 7.5 5 8.5 6.5 10 C8.5 11.5 7 13.5 5.5 14.5 C5 16.5 4.5 18 3.2 17.6 C1.5 15.5 0.9 12.5 1.5 9.5 Z" fill="#9aa3b6"/><path d="M10 7 C11 4 13 2 15.5 1.6 C19 2.6 22 5.5 23.3 9 C23.8 12 23.5 14 22.5 15 C21 14.5 20.5 13 19.5 13.5 C19 15.5 18 19 16.2 19.5 C14.5 18 15 15 14 13 C12.5 12 10.5 11.5 9.8 9.8 C9.5 8.5 9.6 7.8 10 7 Z" fill="#9aa3b6"/><path d="M13.5 6.5 L15.5 5 L16 7.5 Z M17.5 9 L19.5 8.5 L18.5 11 Z" fill="#fff" opacity="0.8"/></svg>
<svg class="ic" style="left:1540.2px;top:941.3px;" width="24.8" height="24.8" viewBox="0 0 24.8 24.8" ><circle cx="12.4" cy="12.4" r="11.7" fill="#fff" stroke="#9aa3b6" stroke-width="1.3"/><rect x="11" y="9.3" width="3" height="10.2" fill="#9aa3b6"/><rect x="11" y="5.3" width="3" height="2.3" fill="#9aa3b6"/></svg>
<svg class="ic" style="left:1579.6px;top:943.2px;" width="26.5" height="22.6" viewBox="0 0 26.5 22.6" ><rect x="0" y="0" width="26.5" height="22.6" rx="0.8" fill="#1c2d4e"/><rect x="2.4" y="2.3" width="21.7" height="1.5" fill="#fff"/><rect x="1.95" y="5.65" width="1.5" height="1.5" fill="#fff"/><rect x="1.95" y="9.10" width="1.5" height="1.5" fill="#fff"/><rect x="1.95" y="12.55" width="1.5" height="1.5" fill="#fff"/><rect x="1.95" y="16.00" width="1.5" height="1.5" fill="#fff"/><rect x="1.95" y="19.45" width="1.5" height="1.5" fill="#fff"/><rect x="5.47" y="5.65" width="1.5" height="1.5" fill="#fff"/><rect x="5.47" y="9.10" width="1.5" height="1.5" fill="#fff"/><rect x="5.47" y="12.55" width="1.5" height="1.5" fill="#fff"/><rect x="5.47" y="16.00" width="1.5" height="1.5" fill="#fff"/><rect x="5.47" y="19.45" width="1.5" height="1.5" fill="#fff"/><rect x="8.98" y="5.65" width="1.5" height="1.5" fill="#fff"/><rect x="8.98" y="9.10" width="1.5" height="1.5" fill="#fff"/><rect x="8.98" y="12.55" width="1.5" height="1.5" fill="#fff"/><rect x="8.98" y="16.00" width="1.5" height="1.5" fill="#fff"/><rect x="8.98" y="19.45" width="1.5" height="1.5" fill="#fff"/><rect x="12.50" y="5.65" width="1.5" height="1.5" fill="#fff"/><rect x="12.50" y="9.10" width="1.5" height="1.5" fill="#fff"/><rect x="12.50" y="12.55" width="1.5" height="1.5" fill="#fff"/><rect x="12.50" y="16.00" width="1.5" height="1.5" fill="#fff"/><rect x="12.50" y="19.45" width="1.5" height="1.5" fill="#fff"/><rect x="16.02" y="5.65" width="1.5" height="1.5" fill="#fff"/><rect x="16.02" y="9.10" width="1.5" height="1.5" fill="#fff"/><rect x="16.02" y="12.55" width="1.5" height="1.5" fill="#fff"/><rect x="16.02" y="16.00" width="1.5" height="1.5" fill="#fff"/><rect x="16.02" y="19.45" width="1.5" height="1.5" fill="#fff"/><rect x="19.53" y="5.65" width="1.5" height="1.5" fill="#fff"/><rect x="19.53" y="9.10" width="1.5" height="1.5" fill="#fff"/><rect x="19.53" y="12.55" width="1.5" height="1.5" fill="#fff"/><rect x="19.53" y="16.00" width="1.5" height="1.5" fill="#fff"/><rect x="19.53" y="19.45" width="1.5" height="1.5" fill="#fff"/><rect x="23.05" y="5.65" width="1.5" height="1.5" fill="#fff"/><rect x="23.05" y="9.10" width="1.5" height="1.5" fill="#fff"/><rect x="23.05" y="12.55" width="1.5" height="1.5" fill="#fff"/><rect x="23.05" y="16.00" width="1.5" height="1.5" fill="#fff"/><rect x="23.05" y="19.45" width="1.5" height="1.5" fill="#fff"/></svg>
<svg class="ic" style="left:1523.3px;top:981.5px;" width="18.2" height="23" viewBox="0 0 18.2 23" ><circle cx="9" cy="3.3" r="2.6" fill="#fff" stroke="#1c2d4e" stroke-width="1.4"/><path d="M5.5 10.6 L5.5 8.899999999999999 Q5.7 6.699999999999999 9 6.6 Q12.3 6.699999999999999 12.5 8.899999999999999 L12.5 10.6 Z" fill="#1c2d4e"/><circle cx="3.6" cy="15.3" r="2.6" fill="#fff" stroke="#1c2d4e" stroke-width="1.4"/><path d="M0.10000000000000009 22.6 L0.10000000000000009 20.9 Q0.30000000000000027 18.7 3.6 18.6 Q6.9 18.7 7.1 20.9 L7.1 22.6 Z" fill="#1c2d4e"/><circle cx="14.5" cy="15.3" r="2.6" fill="#fff" stroke="#1c2d4e" stroke-width="1.4"/><path d="M11.0 22.6 L11.0 20.9 Q11.2 18.7 14.5 18.6 Q17.8 18.7 18.0 20.9 L18.0 22.6 Z" fill="#1c2d4e"/></svg>
<svg class="ic" style="left:1558.6px;top:978.2px;" width="26.5" height="31.8" viewBox="0 0 26.5 31.8" ><rect x="6.01" y="0.81" width="19.67" height="24.99" fill="#fff" stroke="#1c2d4e" stroke-width="1.6"/><rect x="0.82" y="6.10" width="19.98" height="24.89" fill="#fff" stroke="#1c2d4e" stroke-width="1.6"/><path d="M3.77 9.96 H8.46 M3.77 15.04 H17.63 M3.77 18.69 H17.63 M3.77 22.25 H17.63 M10.91 27.43 H17.63" stroke="#1c2d4e" stroke-width="1.4"/></svg>

</div></div>
<svg class="ic" style="left:46px;top:257px;" width="66" height="56" viewBox="0 0 66 56" ><path d="M4.8 22.4 H34.7 V5.9 L58.5 27.7 L34.7 49.5 V33.2 H4.8 Z" fill="#fff" stroke="#fff" stroke-width="5.8" stroke-linejoin="round"/><path d="M4.8 22.4 H34.7 V5.9 L58.5 27.7 L34.7 49.5 V33.2 H4.8 Z" fill="#273e64" stroke="#273e64" stroke-width="1" stroke-linejoin="round"/></svg>
<svg class="ic" style="left:265px;top:293px;" width="56" height="49" viewBox="0 0 56 49" ><path d="M54.3 18.9 H26.8 V1.9 L2 24.5 L26.8 47.1 V30.1 H54.3 Z" fill="#273e64" stroke="#273e64" stroke-width="1.6" stroke-linejoin="round"/></svg>
<svg class="ic" style="left:1528px;top:369px;" width="56" height="62" viewBox="0 0 56 62" ><path d="M23 5.3 H32 V34.1 H49.9 L27.5 55.8 L5.1 34.1 H23 Z" fill="#fff" stroke="#fff" stroke-width="5.2" stroke-linejoin="round" opacity="0.9"/><path d="M23 5.3 H32 V34.1 H49.9 L27.5 55.8 L5.1 34.1 H23 Z" fill="#273e64" stroke="#273e64" stroke-width="3" stroke-linejoin="round"/></svg>
</body>
</html>
